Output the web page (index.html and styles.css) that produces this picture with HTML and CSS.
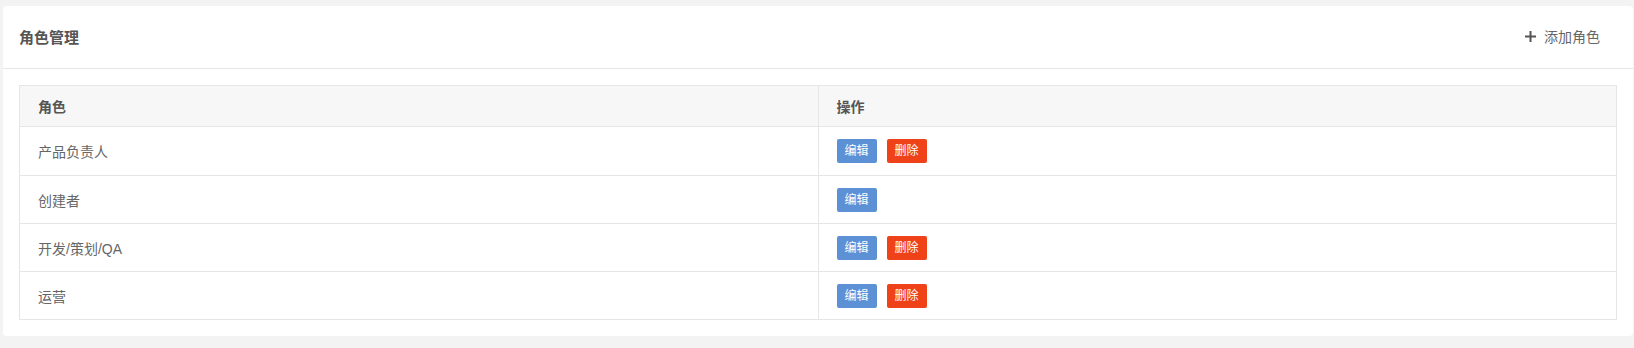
FILE: index.html
```html
<!DOCTYPE html>
<html lang="zh-CN">
<head>
<meta charset="utf-8">
<title>角色管理</title>
<link rel="stylesheet" href="styles.css">
</head>
<body>
<div class="card">
  <div class="card-header">
    <h2 class="card-title">角色管理</h2>
    <button class="add-btn" type="button">
      <svg class="plus" width="11" height="11" viewBox="0 0 11 11"><path d="M5.5 0v11M0 5.5h11" stroke="#555" stroke-width="2"/></svg>
      <span>添加角色</span>
    </button>
  </div>
  <div class="card-body">
    <table class="role-table">
      <thead>
        <tr><th>角色</th><th>操作</th></tr>
      </thead>
      <tbody>
        <tr class="first"><td>产品负责人</td><td><span class="btn btn-edit">编辑</span><span class="btn btn-del">删除</span></td></tr>
        <tr><td>创建者</td><td><span class="btn btn-edit">编辑</span></td></tr>
        <tr><td>开发/策划/QA</td><td><span class="btn btn-edit">编辑</span><span class="btn btn-del">删除</span></td></tr>
        <tr><td>运营</td><td><span class="btn btn-edit">编辑</span><span class="btn btn-del">删除</span></td></tr>
      </tbody>
    </table>
  </div>
</div>
</body>
</html>
```
FILE: styles.css
```css
html, body {
  margin: 0;
  background: #f3f3f3;
}
body {
  padding: 6px 1px 12px 3px;
  font-family: "Liberation Sans", "Noto Sans CJK SC", sans-serif;
  color: #666;
}
.card {
  background: #fff;
  border-radius: 4px;
}
.card-header {
  height: 62px;
  border-bottom: 1px solid #e6e6e6;
  display: flex;
  align-items: center;
  justify-content: space-between;
  padding: 0 33px 0 16px;
}
.card-title {
  margin: 0 0 2px;
  font-size: 15px;
  font-weight: bold;
  color: #555;
}
.add-btn {
  border: none;
  background: none;
  padding: 0;
  margin-bottom: 2px;
  display: flex;
  align-items: center;
  gap: 8px;
  font-family: inherit;
  font-size: 14px;
  color: #666;
  cursor: pointer;
}
.plus {
  display: block;
}
.card-body {
  padding: 16px 16px 16px 16px;
}
.role-table {
  width: 100%;
  border-collapse: collapse;
  border: 1px solid #dcdcdc;
  table-layout: fixed;
  font-size: 14px;
}
.role-table th,
.role-table td {
  width: 50%;
  text-align: left;
  padding: 0 18px;
  border: 1px solid #e6e6e6;
}
.role-table th {
  height: 40px;
  background: #f7f7f7;
  font-weight: bold;
  color: #555;
}
.role-table td {
  height: 47px;
  color: #666;
}
.role-table tr.first td {
  height: 48px;
}
.btn {
  display: inline-block;
  width: 40px;
  height: 24px;
  line-height: 24px;
  text-align: center;
  font-size: 12px;
  color: #fff;
  border-radius: 2px;
  vertical-align: middle;
}
.btn + .btn {
  margin-left: 10px;
}
.btn-edit {
  background: #5c91d6;
}
.btn-del {
  background: #ef4219;
}
```
